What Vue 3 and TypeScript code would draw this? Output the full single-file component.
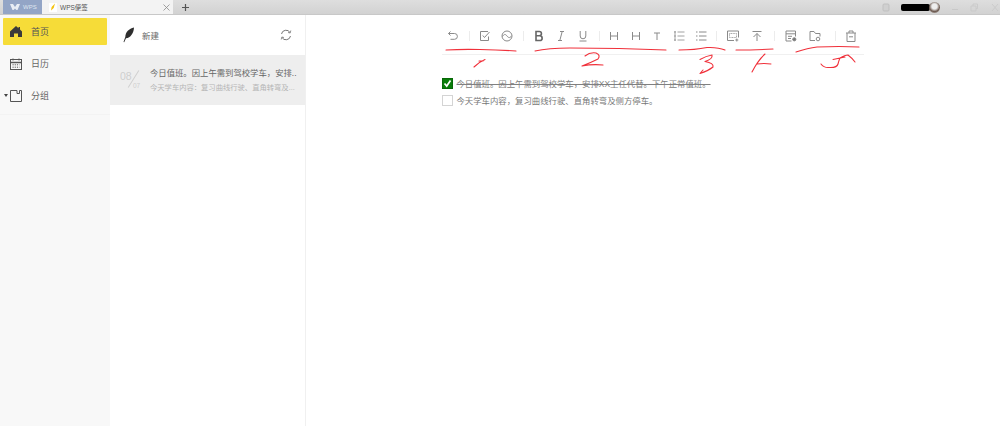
<script setup lang="ts">
const navItems = [
  { label: '首页', active: true },
  { label: '日历', active: false },
  { label: '分组', active: false },
]
const redLines = [
  'M446 50 Q462 49 480 49.5 Q500 50 516 51',
  'M474 67 Q479 62 485 59.5 M479 61 L483 61',
  'M535 51 Q548 48 570 48 Q620 48 666 50',
  'M585 56 Q590 52 596 53 Q601 55 598 59 Q590 63 582 66 Q592 64 603 65',
  'M679 50 Q695 50 707 47.5 Q718 47 725 50',
  'M700 59.5 Q706 56 712 55 Q713 59 705 61.5 Q714 63 713 67 Q708 71 700 73.5 M700 73.5 L703 70',
  'M736 50 Q755 50 773 49',
  'M765 54 Q758 60 752 72 M757 64 Q764 63 771 64 M763 56 Q758 62 756 65',
  'M796 52 Q808 48 817 47 Q840 46 859 47',
  'M821 64 Q824 68 829 67.5 Q837 68 838 64 Q839 60 840 58 Q845 55 848 55 Q852 58 855 62 M833 59.5 L845 57',
]
</script>

<template>
  <div class="app">
    <header class="tabbar">
      <div class="tab-wps">
        <svg width="10" height="8" viewBox="0 0 10 8"><path d="M0 1h3l2 3 2-3h3L7.500 7h-1L5 5.500 3.500 7h-1z" fill="#e8edf5" /></svg>
        <span>WPS</span>
      </div>
      <div class="tab-note">
        <span class="note-badge"><svg width="6" height="8" viewBox="0 0 6 8"><path d="M5 0.500 3.700 5 1 7.500 1.600 4z" fill="#f4c20d" /></svg></span>
        <span class="tab-title">WPS便签</span>
        <svg class="tab-close" width="7" height="7" viewBox="0 0 7 7"><path d="M.5.500l6 6M6.500.500l-6 6" stroke="#8a8a8a" stroke-width=".8" /></svg>
      </div>
      <div class="tab-plus">
        <svg width="9" height="9" viewBox="0 0 9 9"><path d="M4.500 1v7M1 4.500h7" stroke="#555" stroke-width="1.200" /></svg>
      </div>
      <div class="win-ctrls">
        <svg width="8" height="9" viewBox="0 0 8 9"><rect x="1" y="1" width="6" height="7" rx="1" fill="#d0d0d0" stroke="#bbb" stroke-width=".8" /></svg>
        <div class="user">
          <span class="user-name"></span>
          <span class="avatar"></span>
        </div>
        <svg width="8" height="9" viewBox="0 0 8 9"><path d="M1 6.500h6" stroke="#c8c8c8" /></svg>
        <svg width="8" height="9" viewBox="0 0 8 9"><path d="M1 3h5v5H1zM3 3V1h4.500v4.500H6" fill="none" stroke="#c8c8c8" stroke-width=".8" /></svg>
        <svg class="win-close" width="8" height="9" viewBox="0 0 8 9"><path d="M1 1l6 7M7 1L1 8" stroke="#c8c8c8" stroke-width=".8" /></svg>
      </div>
    </header>

    <div class="body">
      <aside class="sidebar">
        <div v-for="(item, i) in navItems" :key="item.label" class="nav-item" :class="{ active: item.active }">
          <span v-if="i === 2" class="caret"></span>
          <svg v-if="i === 0" width="12" height="11" viewBox="0 0 12 11"><path d="M6 0 8.500 2.200V1h1.500v2.600L12 5.500V11H8V7.500H4V11H0V5.500z" fill="#3a3a3a" /></svg>
          <svg v-else-if="i === 1" width="12" height="12" viewBox="0 0 12 12" fill="none" stroke="#555"><rect x=".5" y="1.500" width="11" height="10" /><path d="M.5 4.500h11" stroke-width="1.500" /><path d="M3 .5v2M9 .5v2" /><path d="M2.500 6.800h7M2.500 9.200h7" stroke-dasharray="1.200 1" /></svg>
          <svg v-else width="12" height="12" viewBox="0 0 12 12" fill="none" stroke="#555"><path d="M.5.500h6.500v3h2.500V.5h2v11H.5z" /></svg>
          <span class="nav-label">{{ item.label }}</span>
        </div>
        <div class="nav-rule"></div>
      </aside>

      <section class="list">
        <div class="list-head">
          <svg class="feather" width="12" height="16" viewBox="0 0 12 16"><path d="M11 .5C6 1.500 2.500 5 2.300 10L.5 15l.7.300 1.800-4C7.500 11 10.800 6 11 .5z" fill="#2e2e2e" /></svg>
          <span class="new-label">新建</span>
          <svg class="sync" width="12" height="12" viewBox="0 0 12 12" fill="none" stroke="#777" stroke-width="1"><path d="M1.500 5A4.600 4.600 0 0 1 10 3.500M10.500 7A4.600 4.600 0 0 1 2 8.500" /><path d="M10.800 1.500 10.200 4 8 3.500M1.200 10.500 1.800 8 4 8.500" stroke-width=".8" /></svg>
        </div>
        <div class="note-row">
          <div class="note-date">
            <span class="day">08</span>
            <span class="slash"></span>
            <span class="month">07</span>
          </div>
          <div class="note-text">
            <div class="note-title">今日值班。因上午需到驾校学车，安排..</div>
            <div class="note-sub">今天学车内容：复习曲线行驶、直角转弯及...</div>
          </div>
        </div>
      </section>

      <main class="editor">
        <div class="column">
          <div class="toolbar">
            <div class="group first">
              <span class="tool"><svg viewBox="0 0 12 12"><path d="M3.500 1.500 1.500 3.500l2 2M1.500 3.500h6a2.900 2.900 0 0 1 0 5.800H3.500" /></svg></span>
            </div>
            <div class="group">
              <span class="tool"><svg viewBox="0 0 12 12"><path d="M9.500 6.500v4h-8v-9H9" /><path d="M3.800 5.500 5.500 7.500 10.500 2" /></svg></span>
              <span class="tool"><svg viewBox="0 0 12 12"><circle cx="6" cy="6" r="5" /><path d="M1.500 6.500C3 3.800 4.500 4 6 6s3 2.200 4.600-.2" /></svg></span>
            </div>
            <div class="group">
              <span class="tool"><svg viewBox="0 0 12 12" class="bold"><path d="M3 1.500h3.300a2.100 2.100 0 0 1 0 4.300H3zM3 5.800h3.800a2.300 2.300 0 0 1 0 4.700H3z" /></svg></span>
              <span class="tool"><svg viewBox="0 0 12 12"><path d="M5 1.500h4M3 10.500h4M7.200 1.500l-2.400 9" /></svg></span>
              <span class="tool"><svg viewBox="0 0 12 12"><path d="M3.200 1v5a2.800 2.800 0 0 0 5.600 0V1M2.500 11h7" /></svg></span>
            </div>
            <div class="group tight">
              <span class="tool"><svg viewBox="0 0 12 12"><path d="M2.500 2v8M9.500 2v8M2.500 6h7" /></svg></span>
              <span class="tool"><svg viewBox="0 0 12 12"><path d="M2.500 2v8M9.500 2v8M2.500 6h7" /></svg></span>
              <span class="tool"><svg viewBox="0 0 12 12"><path d="M3 3h6M6 3v7" /></svg></span>
              <span class="tool"><svg viewBox="0 0 12 12"><path d="M4.500 2h7M4.500 6h7M4.500 10h7M1 2h2M1 6h2M1 10h2M2 1v10" stroke-width=".8" /></svg></span>
              <span class="tool"><svg viewBox="0 0 12 12"><path d="M4 2h7.500M4 6h7.500M4 10h7.500M1 2h1.500M1 6h1.500M1 10h1.500" /></svg></span>
            </div>
            <div class="group wide">
              <span class="tool"><svg viewBox="0 0 12 12"><path d="M7 10.500H.5V1h11v6.500" /><path d="M2.500 3.500h7v4h-7z" stroke-dasharray="1 .6" stroke-width=".8" /><path d="M9.800 8.500v3M8.300 10h3" /></svg></span>
              <span class="tool"><svg viewBox="0 0 12 12"><path d="M1.500 1.500h9M6 11V3.500M2.500 7l3.500-3.500L9.500 7" /></svg></span>
            </div>
            <div class="group wide">
              <span class="tool"><svg viewBox="0 0 12 12"><path d="M6.500 11h-5.500V1h9.500v5.500M1 3.800h9.500M3 6.300h4M3 8.500h3" /><circle cx="9.300" cy="9.300" r="1.600" fill="#777" /></svg></span>
              <span class="tool"><svg viewBox="0 0 12 12"><path d="M6 10.500H1V1.500h4l1.500 2h4.500v3" /><circle cx="9" cy="9" r="1.800" /></svg></span>
            </div>
            <div class="group last">
              <span class="tool"><svg viewBox="0 0 12 12"><path d="M1 3h10M4 3V1h4v2M2 3v8.500h8V3M4 6.800h4" /></svg></span>
            </div>
          </div>

          <div class="task done">
            <span class="check checked"><svg width="9" height="9" viewBox="0 0 9 9"><path d="M1.500 4.500 3.700 7 7.500 1.500" fill="none" stroke="#fff" stroke-width="1.700" /></svg></span>
            <span class="task-text">今日值班。因上午需到驾校学车，安排XX主任代替。下午正常值班。</span>
          </div>
          <div class="task">
            <span class="check"></span>
            <span class="task-text">今天学车内容，复习曲线行驶、直角转弯及侧方停车。</span>
          </div>
        </div>
      </main>
    </div>

    <svg class="marks" width="1000" height="426" viewBox="0 0 1000 426">
      <path v-for="d in redLines" :key="d" :d="d" fill="none" stroke="#f0303a" stroke-width="1.100" stroke-linecap="round" stroke-linejoin="round" />
    </svg>
  </div>
</template>

<style scoped>
.app {
  position: relative;
  width: 1000px;
  height: 426px;
  overflow: hidden;
  display: flex;
  flex-direction: column;
  background: #fff;
  font-family: "Liberation Sans", "Noto Sans CJK SC", sans-serif;
  color: #555;
}
.tabbar {
  height: 15px;
  flex: none;
  display: flex;
  background: linear-gradient(#dedede, #d2d2d2);
  border-bottom: 1px solid #c8c8c8;
  box-sizing: border-box;
  padding-left: 3px;
}
.tab-wps {
  width: 39px;
  display: flex;
  align-items: center;
  gap: 3px;
  padding-left: 7px;
  box-sizing: border-box;
  background: #93a5c6;
  color: #dfe5f0;
  font-size: 6px;
}
.tab-note {
  width: 131px;
  display: flex;
  align-items: center;
  padding-left: 7px;
  box-sizing: border-box;
  background: #f3f3f3;
  font-size: 6.500px;
  color: #555;
}
.note-badge {
  width: 8px;
  height: 9px;
  margin-right: 3px;
  background: #fff;
  display: flex;
  align-items: center;
  justify-content: center;
}
.tab-title { flex: 1; }
.tab-close { margin-right: 3px; }
.tab-plus {
  width: 24px;
  display: flex;
  align-items: center;
  justify-content: center;
}
.win-ctrls {
  margin-left: auto;
  display: flex;
  align-items: center;
  gap: 11px;
  padding-right: 1px;
}
.win-close { margin-left: 2px; }
.user { display: flex; align-items: center; }
.user-name {
  width: 29px;
  height: 7px;
  border-radius: 2px;
  background: #000;
}
.avatar {
  width: 11px;
  height: 11px;
  margin-left: -1px;
  border-radius: 50%;
  background: radial-gradient(circle at 50% 40%, #eee 0 30%, #6d5a50 60%, #ddd 100%);
}
.body { flex: 1; display: flex; min-height: 0; }
.sidebar {
  width: 110px;
  flex: none;
  box-sizing: border-box;
  background: #f8f8f8;
  padding: 3px 3px 0;
}
.nav-item {
  position: relative;
  height: 27px;
  margin-bottom: 5px;
  padding-left: 7px;
  display: flex;
  align-items: center;
  gap: 9px;
  font-size: 9px;
  color: #666;
}
.nav-item.active { background: #f6dc38; border-radius: 1px; color: #555; }
.caret {
  position: absolute;
  left: 1px;
  top: 12px;
  border: 2px solid transparent;
  border-top: 3px solid #444;
  border-bottom: 0;
}
.nav-rule { height: 1px; margin: 1px -3px 0; background: #f3f3f3; }
.list {
  width: 196px;
  flex: none;
  box-sizing: border-box;
  border-right: 1px solid #f0f0f0;
}
.list-head {
  height: 40px;
  display: flex;
  align-items: center;
  padding: 0 13px;
}
.new-label { margin-left: 7px; font-size: 8.500px; color: #666; }
.sync { margin-left: auto; }
.note-row {
  height: 50px;
  display: flex;
  align-items: center;
  background: #eeeeee;
  padding-left: 10px;
}
.note-date {
  position: relative;
  width: 30px;
  height: 22px;
  flex: none;
  color: #cfcfcf;
}
.day { position: absolute; left: 0; top: 1px; font-size: 10.500px; line-height: 12px; }
.month { position: absolute; left: 13px; top: 12px; font-size: 6.500px; line-height: 10px; }
.slash {
  position: absolute;
  left: 13px;
  top: 0;
  width: 1px;
  height: 20px;
  background: #cfcfcf;
  transform: rotate(32deg);
}
.note-text { width: 150px; }
.note-title {
  font-size: 8.350px;
  line-height: 13px;
  color: #666;
  white-space: nowrap;
}
.note-sub {
  margin-top: 2px;
  font-size: 7.300px;
  line-height: 11px;
  color: #b5b5b5;
  white-space: nowrap;
}
.editor { flex: 1; min-width: 0; padding-right: 1px; }
.column { width: 422px; margin: 0 auto; }
.toolbar {
  height: 40px;
  display: flex;
  align-items: center;
  padding-top: 2px;
  border-bottom: 1px solid #f0f0f0;
  box-sizing: border-box;
}
.group {
  display: flex;
  align-items: center;
  padding: 0 5px;
  position: relative;
}
.group::before {
  content: "";
  position: absolute;
  left: 0;
  top: 5px;
  width: 1px;
  height: 10px;
  background: #ececec;
}
.group.first { padding-left: 0; }
.group.first::before { display: none; }
.group.last { margin-left: auto; padding-right: 2px; }
.tool {
  width: 22px;
  height: 20px;
  display: flex;
  align-items: center;
  justify-content: center;
}
.tight .tool { width: 21.600px; }
.wide .tool { width: 24px; }
.tool svg {
  width: 12px;
  height: 12px;
  fill: none;
  stroke: #8a8a8a;
  stroke-width: 1;
}
.tool svg.bold { stroke: #666; stroke-width: 1.600; }
.task {
  height: 17px;
  display: flex;
  align-items: center;
  gap: 4px;
  font-size: 8.400px;
  color: #777;
  white-space: nowrap;
}
.toolbar + .task { margin-top: 20px; }
.task .task-text { position: relative; top: -1px; }
.task.done .task-text { text-decoration: line-through; color: #808080; }
.check {
  width: 11px;
  height: 11px;
  flex: none;
  box-sizing: border-box;
  border: 1px solid #d4d4d4;
  display: flex;
  align-items: center;
  justify-content: center;
}
.check.checked { background: #0a7d0a; border-color: #076807; }
.marks { position: absolute; left: 0; top: 0; pointer-events: none; }
</style>
